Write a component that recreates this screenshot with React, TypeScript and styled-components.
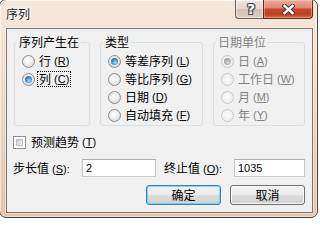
import React from 'react';
import styled, { createGlobalStyle } from 'styled-components';

const Global = createGlobalStyle`
  html, body { margin: 0; padding: 0; background: #ffffff; width: 318px; height: 219px; overflow: hidden; }
  body { font-family: "Noto Sans CJK SC", "Liberation Sans", sans-serif; font-size: 12px; color: #000; }
  * { box-sizing: border-box; }
`;

const Window = styled.div`
  width: 319px;
  height: 219px;
  margin: -1px 0 0 -1px;
  border: 1px solid #4d4238;
  border-radius: 7px;
  background: linear-gradient(180deg, #f6e7db 0%, #f0dccc 35%, #ebcdb6 75%, #e7c3a7 100%);
  box-shadow: inset 0 0 0 1px rgba(255, 255, 255, 0.5);
  display: flex;
  flex-direction: column;
  overflow: hidden;
`;

const TitleBar = styled.div`
  height: 28px;
  flex: none;
  display: flex;
  padding-right: 4px;
`;

const Title = styled.div`
  align-self: center;
  margin-left: 6px;
  line-height: 28px;
  font-size: 12px;
  color: #1a1a1a;
  text-shadow: 0 0 5px rgba(255, 255, 255, 0.95), 0 0 2px #fff;
`;

const Captions = styled.div`
  margin-left: auto;
  display: flex;
  height: 19px;
`;

const HelpBtn = styled.div`
  width: 28px;
  height: 19px;
  border: 1px solid #6b5a4e;
  border-top: none;
  border-right: none;
  border-radius: 0 0 0 4px;
  background: linear-gradient(180deg, #efe7e1 0%, #e2d6cc 48%, #d2c1b3 52%, #dccdc1 100%);
  box-shadow: inset 0 0 0 1px rgba(255, 255, 255, 0.55);
  display: flex;
  align-items: center;
  justify-content: center;
`;

const HelpGlyph = styled.span`
  font-family: "DejaVu Sans", sans-serif;
  font-weight: bold;
  font-size: 14px;
  line-height: 14px;
  color: #fff;
  margin-left: 3px;
  text-shadow: 1px 0 #4a4a4a, -1px 0 #4a4a4a, 0 1px #4a4a4a, 0 -1px #4a4a4a,
    1px 1px #4a4a4a, -1px -1px #4a4a4a, 1px -1px #4a4a4a, -1px 1px #4a4a4a;
`;

const CloseBtn = styled.div`
  width: 50px;
  height: 19px;
  border: 1px solid #5a2a1f;
  border-top: none;
  border-radius: 0 0 4px 0;
  background: linear-gradient(180deg, #eab0a1 0%, #df8a74 42%, #c9492e 50%, #c03c22 78%, #d8694d 100%);
  box-shadow: inset 0 0 0 1px rgba(255, 210, 195, 0.45);
  display: flex;
  align-items: center;
  justify-content: center;
`;

const Client = styled.div`
  margin-left: 6px;
  width: 307px;
  height: 185px;
  flex: none;
  border: 1px solid #7c7772;
  background: #f0f0f0;
  box-shadow: 0 0 0 1px rgba(255, 255, 255, 0.45);
  padding: 6px 7px 0 6px;
  display: flex;
  flex-direction: column;
`;

const Groups = styled.div`
  display: flex;
  gap: 10px;
  margin-left: 1px;
  height: 91px;
`;

const Group = styled.fieldset<{ $w: number }>`
  margin: 0;
  width: ${p => p.$w}px;
  height: 91px;
  padding: 0 0 0 2px;
  border: 1px solid #d5dfe5;
  border-radius: 3px;
  min-width: 0;
`;

const Legend = styled.legend<{ $disabled?: boolean }>`
  padding: 0 2px;
  line-height: 14px;
  font-size: 12px;
  color: ${p => (p.$disabled ? '#838383' : '#000')};
`;

const GroupBody = styled.div`
  padding: 3px 0 0 5px;
  display: flex;
  flex-direction: column;
`;

const Option = styled.div`
  height: 18px;
  display: flex;
  align-items: center;
  gap: 2px;
  white-space: nowrap;
`;

const Radio = styled.span<{ $checked?: boolean; $disabled?: boolean }>`
  position: relative;
  flex: none;
  width: 13px;
  height: 13px;
  border-radius: 50%;
  border: 1px solid ${p => (p.$disabled ? '#c9c9c9' : '#8a8a8a')};
  background: ${p =>
    p.$disabled
      ? 'radial-gradient(circle at 50% 50%, #fafafa 0%, #f0f0f0 60%, #e6e6e6 100%)'
      : 'radial-gradient(circle at 45% 40%, #ffffff 0%, #f0f0f0 40%, #d6d6d6 85%, #c9c9c9 100%)'};
  &::after {
    content: '';
    display: ${p => (p.$checked ? 'block' : 'none')};
    position: absolute;
    left: 2px;
    top: 2px;
    width: 7px;
    height: 7px;
    border-radius: 50%;
    background: ${p =>
      p.$disabled
        ? 'radial-gradient(circle at 60% 65%, #d8d8d8 0%, #a9a9a9 55%, #8a8a8a 100%)'
        : 'radial-gradient(circle at 60% 65%, #a6e6fc 0%, #3f93d3 45%, #184a80 100%)'};
  }
`;

const Label = styled.span<{ $focus?: boolean; $disabled?: boolean }>`
  display: inline-flex;
  align-items: center;
  height: 16px;
  line-height: 14px;
  padding: 0 1px;
  border: 1px dotted ${p => (p.$focus ? '#000' : 'transparent')};
  color: ${p => (p.$disabled ? '#838383' : '#000')};
`;

const Mn = styled.span`
  font-family: "Liberation Sans", sans-serif;
  font-size: 11px;
  margin-left: 3px;
  u { text-decoration: underline; text-underline-offset: 1px; }
`;

const CheckRow = styled.div`
  margin-top: 8px;
  height: 16px;
  display: flex;
  align-items: center;
  gap: 3px;
`;

const CheckBox = styled.span`
  position: relative;
  flex: none;
  width: 13px;
  height: 13px;
  border: 1px solid #8e8f8f;
  background: #fff;
  &::after {
    content: '';
    position: absolute;
    inset: 2px;
    background: linear-gradient(135deg, #c3c6cb 0%, #e2e3e5 60%, #f2f2f2 100%);
    border: 1px solid #b9bcc0;
  }
`;

const InputRow = styled.div`
  margin-top: 9px;
  height: 18px;
  display: flex;
  align-items: center;
`;

const FieldLabel = styled.span<{ $w: number; $ml?: number }>`
  width: ${p => p.$w}px;
  margin-left: ${p => p.$ml || 0}px;
  flex: none;
  white-space: nowrap;
  line-height: 16px;
`;

const TextBox = styled.input<{ $w: number }>`
  width: ${p => p.$w}px;
  height: 18px;
  flex: none;
  margin: 0;
  padding: 0 0 0 3px;
  border: 1px solid #abadb3;
  border-bottom-color: #c9ccd2;
  border-left-color: #c2c5cb;
  border-right-color: #c2c5cb;
  background: #fff;
  font-family: "Liberation Sans", sans-serif;
  font-size: 11px;
  color: #000;
  outline: none;
`;

const ButtonRow = styled.div`
  margin-top: 8px;
  display: flex;
  justify-content: flex-end;
  gap: 9px;
`;

const Button = styled.button<{ $default?: boolean }>`
  width: 75px;
  height: 20px;
  margin: 0;
  padding: 0;
  border: 1px solid ${p => (p.$default ? '#3c7fb1' : '#707070')};
  border-radius: 3px;
  background: linear-gradient(180deg, #f2f2f2 0%, #ebebeb 48%, #dddddd 52%, #cfcfcf 100%);
  box-shadow: ${p =>
    p.$default ? 'inset 0 0 0 1px rgba(90, 205, 250, 0.75)' : 'inset 0 0 0 1px rgba(255, 255, 255, 0.8)'};
  font-family: "Noto Sans CJK SC", sans-serif;
  font-size: 12px;
  line-height: 16px;
  color: #000;
`;

const CloseIcon = () => (
  <svg width="13" height="11" viewBox="0 0 13 11">
    <g strokeLinecap="square">
      <path d="M2.5 2 L10.5 9 M10.5 2 L2.5 9" stroke="#3d3d3d" strokeWidth="4.4" />
      <path d="M2.5 2 L10.5 9 M10.5 2 L2.5 9" stroke="#ffffff" strokeWidth="2.4" />
    </g>
  </svg>
);

type Opt = { text: string; key: string; checked?: boolean; focus?: boolean };

const OptionList = ({ items, disabled }: { items: Opt[]; disabled?: boolean }) => (
  <GroupBody>
    {items.map(o => (
      <Option key={o.text}>
        <Radio $checked={o.checked} $disabled={disabled} />
        <Label $focus={o.focus} $disabled={disabled}>
          {o.text}
          <Mn>
            (<u>{o.key}</u>)
          </Mn>
        </Label>
      </Option>
    ))}
  </GroupBody>
);

export default function App() {
  return (
    <>
      <Global />
      <Window>
        <TitleBar>
          <Title>序列</Title>
          <Captions>
            <HelpBtn>
              <HelpGlyph>?</HelpGlyph>
            </HelpBtn>
            <CloseBtn>
              <CloseIcon />
            </CloseBtn>
          </Captions>
        </TitleBar>
        <Client>
          <Groups>
            <Group $w={76}>
              <Legend>序列产生在</Legend>
              <OptionList
                items={[
                  { text: '行', key: 'R' },
                  { text: '列', key: 'C', checked: true, focus: true },
                ]}
              />
            </Group>
            <Group $w={103}>
              <Legend>类型</Legend>
              <OptionList
                items={[
                  { text: '等差序列', key: 'L', checked: true },
                  { text: '等比序列', key: 'G' },
                  { text: '日期', key: 'D' },
                  { text: '自动填充', key: 'F' },
                ]}
              />
            </Group>
            <Group $w={92}>
              <Legend $disabled>日期单位</Legend>
              <OptionList
                disabled
                items={[
                  { text: '日', key: 'A', checked: true },
                  { text: '工作日', key: 'W' },
                  { text: '月', key: 'M' },
                  { text: '年', key: 'Y' },
                ]}
              />
            </Group>
          </Groups>
          <CheckRow>
            <CheckBox />
            <Label>
              预测趋势
              <Mn>
                (<u>T</u>)
              </Mn>
            </Label>
          </CheckRow>
          <InputRow>
            <FieldLabel $w={69}>
              步长值
              <Mn>
                (<u>S</u>):
              </Mn>
            </FieldLabel>
            <TextBox $w={74} readOnly defaultValue="2" />
            <FieldLabel $w={70} $ml={8}>
              终止值
              <Mn>
                (<u>O</u>):
              </Mn>
            </FieldLabel>
            <TextBox $w={71} readOnly defaultValue="1035" />
          </InputRow>
          <ButtonRow>
            <Button $default>确定</Button>
            <Button>取消</Button>
          </ButtonRow>
        </Client>
      </Window>
    </>
  );
}
